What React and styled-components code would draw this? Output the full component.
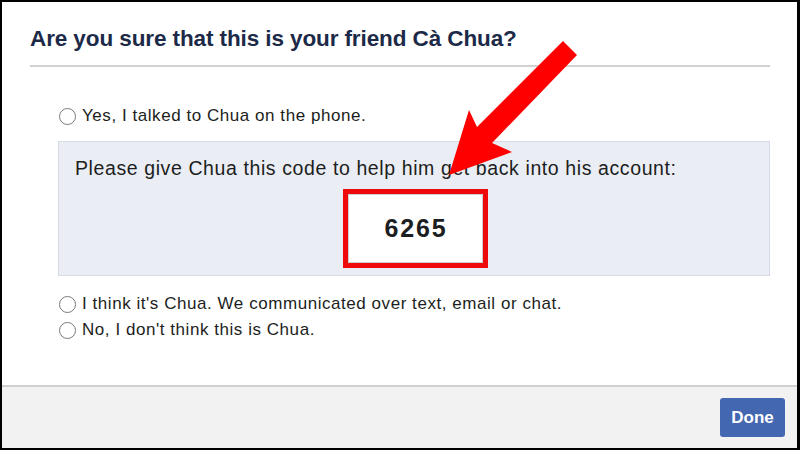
import React from "react";
import styled, { createGlobalStyle } from "styled-components";

const GlobalStyle = createGlobalStyle`
  html, body {
    margin: 0;
    padding: 0;
    background: #000;
  }
  * {
    box-sizing: border-box;
  }
`;

const Frame = styled.div`
  position: relative;
  width: 800px;
  height: 450px;
  border: 2px solid #000;
  border-right-width: 3px;
  background: #fff;
  display: flex;
  flex-direction: column;
  font-family: "Liberation Sans", Arial, sans-serif;
  color: #1c1e21;
`;

const Header = styled.div`
  margin: 0 27px 0 28px;
  padding: 23px 0 12px;
  border-bottom: 2px solid #d2d2d2;
`;

const Title = styled.h1`
  margin: 0;
  font-size: 22.5px;
  line-height: 28px;
  font-weight: 700;
  color: #1c2a48;
  letter-spacing: -0.1px;
`;

const Content = styled.div`
  flex: 1;
  padding: 36px 27px 0 56px;
  display: flex;
  flex-direction: column;
`;

const Option = styled.label`
  display: flex;
  align-items: center;
  gap: 6px;
  height: 26px;
  padding-left: 1px;
  font-size: 17px;
  letter-spacing: 0.55px;
  color: #1c1e21;
`;

const Radio = styled.input.attrs({ type: "radio" })`
  appearance: none;
  margin: 0;
  width: 17px;
  height: 17px;
  border: 1px solid #7a7a7a;
  border-radius: 50%;
  background: #fff;
  flex-shrink: 0;
`;

const CodePanel = styled.div`
  margin: 12px 0 15px;
  background: #ebedf4;
  border: 1px solid #d6dae6;
  padding: 15px 16px 12px;
  display: flex;
  flex-direction: column;
  align-items: center;
`;

const PanelText = styled.p`
  align-self: flex-start;
  margin: 0;
  font-size: 19.5px;
  line-height: 22px;
  letter-spacing: 0.6px;
  color: #1c1e21;
`;

const CodeField = styled.div`
  margin-top: 15px;
  margin-left: 2px;
  width: 135px;
  height: 69px;
  background: #fff;
  border: 1px solid #cfcfcf;
  outline: 5px solid #ee0a0a;
  display: flex;
  align-items: center;
  justify-content: center;
  font-size: 25px;
  font-weight: 700;
  color: #1c1e21;
  letter-spacing: 1.8px;
  padding-left: 2px;
`;

const Footer = styled.div`
  height: 63px;
  border-top: 2px solid #d0d0d0;
  background: #f2f2f2;
  display: flex;
  align-items: center;
  justify-content: flex-end;
  padding-right: 12px;
`;

const DoneButton = styled.button`
  width: 65px;
  height: 39px;
  border: none;
  border-radius: 3px;
  background: #4467b1;
  color: #fff;
  font-family: "Liberation Sans", Arial, sans-serif;
  font-size: 17px;
  font-weight: 700;
  padding: 0;
`;

const Pointer = styled.svg`
  position: absolute;
  top: -2px;
  left: -2px;
  width: 800px;
  height: 450px;
  pointer-events: none;
`;

function ArrowMark() {
  return (
    <Pointer viewBox="0 0 800 450">
      <polygon
        fill="#ff0000"
        points="563,41 577,55 492,143 512,152 449,175 469,110 477,127"
      />
    </Pointer>
  );
}

export default function App() {
  return (
    <>
      <GlobalStyle />
      <Frame>
        <Header>
          <Title>Are you sure that this is your friend Cà Chua?</Title>
        </Header>
        <Content>
          <Option>
            <Radio name="who" />
            Yes, I talked to Chua on the phone.
          </Option>
          <CodePanel>
            <PanelText>
              Please give Chua this code to help him get back into his account:
            </PanelText>
            <CodeField>6265</CodeField>
          </CodePanel>
          <Option>
            <Radio name="who" />
            I think it's Chua. We communicated over text, email or chat.
          </Option>
          <Option>
            <Radio name="who" />
            No, I don't think this is Chua.
          </Option>
        </Content>
        <Footer>
          <DoneButton>Done</DoneButton>
        </Footer>
        <ArrowMark />
      </Frame>
    </>
  );
}
